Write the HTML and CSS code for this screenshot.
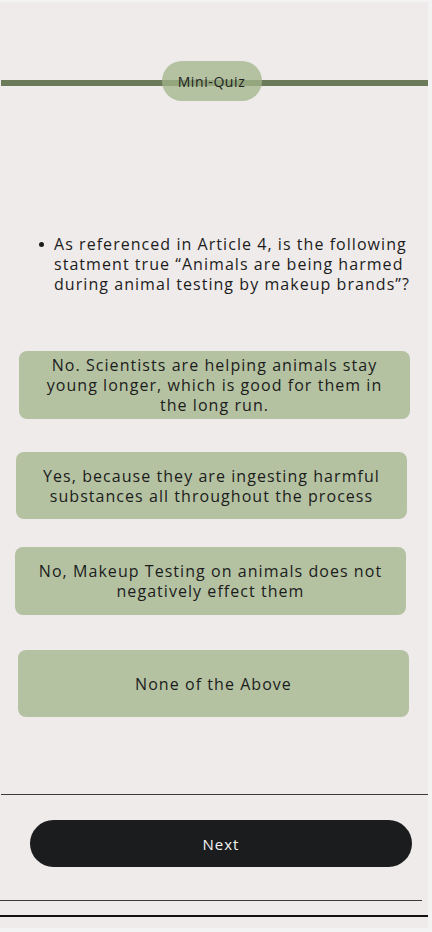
FILE: index.html
```html
<!DOCTYPE html>
<html lang="en">
<head>
<meta charset="utf-8">
<title>Mini-Quiz</title>
<link rel="stylesheet" href="styles.css">
</head>
<body>
<main class="screen">
  <header class="quiz-header">
    <span class="pill">Mini-Quiz</span>
  </header>

  <ul class="question">
    <li>As referenced in Article 4, is the following<br>statment true “Animals are being harmed<br>during animal testing by makeup brands”?</li>
  </ul>

  <div class="options">
    <button class="option opt-1">No. Scientists are helping animals stay<br>young longer, which is good for them in<br>the long run.</button>
    <button class="option opt-2">Yes, because they are ingesting harmful<br>substances all throughout the process</button>
    <button class="option opt-3">No, Makeup Testing on animals does not<br>negatively effect them</button>
    <button class="option opt-4">None of the Above</button>
  </div>

  <hr class="rule rule-top">
  <button class="next">Next</button>
  <hr class="rule rule-mid">
  <hr class="rule rule-bottom">
</main>
</body>
</html>
```
FILE: styles.css
```css
html, body {
  margin: 0;
  padding: 0;
  background: #f4f3f3;
}
body {
  font-family: "Open Sans", "Liberation Sans", sans-serif;
  color: #1c1c1c;
}
.screen {
  width: 428px;
  height: 926px;
  margin-top: 2px;
  background: #efebea;
  display: flex;
  flex-direction: column;
  overflow: hidden;
}
.quiz-header {
  margin-top: 59px;
  margin-left: 1px;
  height: 40px;
  display: flex;
  justify-content: center;
  background: linear-gradient(#6b7b5a, #6b7b5a) left 19px / 100% 6px no-repeat;
}
.pill {
  width: 100px;
  height: 40px;
  margin-left: -6px;
  border-radius: 20px;
  background: rgba(160, 180, 138, 0.75);
  display: flex;
  align-items: center;
  justify-content: center;
  font-size: 14px;
  letter-spacing: 0.6px;
  color: #222;
  padding-top: 1px;
  box-sizing: border-box;
}
.question {
  margin: 133px 0 0;
  padding: 0 0 0 54px;
  font-size: 16px;
  line-height: 20px;
  letter-spacing: 1.05px;
  list-style: none;
}
.question li {
  position: relative;
}
.question li::before {
  content: "";
  position: absolute;
  left: -15px;
  top: 8px;
  width: 5px;
  height: 5px;
  border-radius: 50%;
  background: #1c1c1c;
}
.options {
  display: flex;
  flex-direction: column;
}
.option {
  width: 391px;
  height: 67px;
  border: none;
  border-radius: 8px;
  background: #b4c2a2;
  font-family: inherit;
  font-size: 16px;
  line-height: 20px;
  letter-spacing: 1.05px;
  color: #1c1c1c;
  text-align: center;
  padding: 0;
}
.opt-1 { margin: 57px 0 0 19px; height: 68px; }
.opt-2 { margin: 33px 0 0 16px; }
.opt-3 { margin: 28px 0 0 15px; height: 68px; }
.opt-4 { margin: 35px 0 0 18px; }
.rule {
  border: none;
  margin: 0;
  padding: 0;
  height: 1px;
}
.rule-top {
  margin: 77px 0 0 1px;
  width: 427px;
  background: #3a3a3a;
}
.next {
  margin: 25px 0 0 30px;
  width: 382px;
  height: 47px;
  border: none;
  border-radius: 24px;
  background: #1b1c1e;
  color: #f4f4f4;
  font-family: inherit;
  font-size: 15px;
  letter-spacing: 1px;
  padding: 0;
}
.rule-mid {
  margin-top: 33px;
  width: 422px;
  background: #3a3a3a;
}
.rule-bottom {
  margin-top: 14px;
  width: 428px;
  height: 2px;
  background: #111;
}
```
